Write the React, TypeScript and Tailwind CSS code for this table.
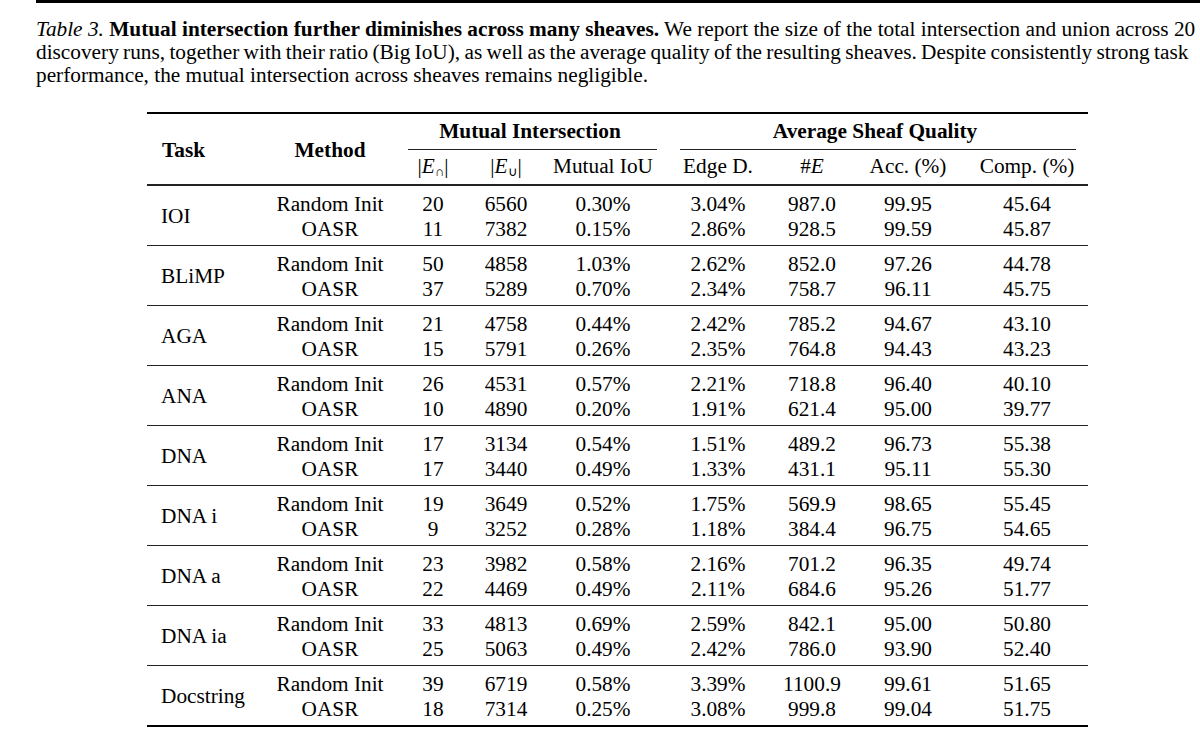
const cols = "grid grid-cols-[115px_136px_70px_76px_118px_112px_76px_116px_122px]";

type Row = string[];
type Group = { task: string; rows: Row[] };

const groups: Group[] = [
  {
    task: "IOI",
    rows: [
      ["Random Init", "20", "6560", "0.30%", "3.04%", "987.0", "99.95", "45.64"],
      ["OASR", "11", "7382", "0.15%", "2.86%", "928.5", "99.59", "45.87"],
    ],
  },
  {
    task: "BLiMP",
    rows: [
      ["Random Init", "50", "4858", "1.03%", "2.62%", "852.0", "97.26", "44.78"],
      ["OASR", "37", "5289", "0.70%", "2.34%", "758.7", "96.11", "45.75"],
    ],
  },
  {
    task: "AGA",
    rows: [
      ["Random Init", "21", "4758", "0.44%", "2.42%", "785.2", "94.67", "43.10"],
      ["OASR", "15", "5791", "0.26%", "2.35%", "764.8", "94.43", "43.23"],
    ],
  },
  {
    task: "ANA",
    rows: [
      ["Random Init", "26", "4531", "0.57%", "2.21%", "718.8", "96.40", "40.10"],
      ["OASR", "10", "4890", "0.20%", "1.91%", "621.4", "95.00", "39.77"],
    ],
  },
  {
    task: "DNA",
    rows: [
      ["Random Init", "17", "3134", "0.54%", "1.51%", "489.2", "96.73", "55.38"],
      ["OASR", "17", "3440", "0.49%", "1.33%", "431.1", "95.11", "55.30"],
    ],
  },
  {
    task: "DNA i",
    rows: [
      ["Random Init", "19", "3649", "0.52%", "1.75%", "569.9", "98.65", "55.45"],
      ["OASR", "9", "3252", "0.28%", "1.18%", "384.4", "96.75", "54.65"],
    ],
  },
  {
    task: "DNA a",
    rows: [
      ["Random Init", "23", "3982", "0.58%", "2.16%", "701.2", "96.35", "49.74"],
      ["OASR", "22", "4469", "0.49%", "2.11%", "684.6", "95.26", "51.77"],
    ],
  },
  {
    task: "DNA ia",
    rows: [
      ["Random Init", "33", "4813", "0.69%", "2.59%", "842.1", "95.00", "50.80"],
      ["OASR", "25", "5063", "0.49%", "2.42%", "786.0", "93.90", "52.40"],
    ],
  },
  {
    task: "Docstring",
    rows: [
      ["Random Init", "39", "6719", "0.58%", "3.39%", "1100.9", "99.61", "51.65"],
      ["OASR", "18", "7314", "0.25%", "3.08%", "999.8", "99.04", "51.75"],
    ],
  },
];

const GroupRows = ({ group }: { group: Group }) => {
  return (
    <div className={`${cols} grid-rows-[25px_25px] pt-[6px] pb-[3px]`}>
      <div className="row-span-2 flex items-center pl-[14px]">{group.task}</div>
      {group.rows.map((row, i) =>
        row.map((cell, j) => (
          <div
            key={`${i}-${j}`}
            className="text-center whitespace-nowrap"
            style={{ gridRow: i + 1, gridColumn: j + 2 }}
          >
            {cell}
          </div>
        ))
      )}
    </div>
  );
};

const Header = () => {
  return (
    <div className={`${cols} grid-rows-[35px_1px_34px]`}>
      <div className="row-span-3 flex items-center pl-[15px] pt-[3px] font-bold">Task</div>
      <div className="row-span-3 flex items-center justify-center pt-[3px] font-bold">Method</div>
      <div className="col-span-3 text-center font-bold pt-[5px]">Mutual Intersection</div>
      <div className="col-span-4 text-center font-bold pt-[5px]">Average Sheaf Quality</div>
      <div className="col-span-3 ml-[10px] mr-[5px] bg-[#222]" />
      <div className="col-span-4 ml-[18px] mr-[12px] bg-[#222]" />
      <div className="text-center pt-[4px] whitespace-nowrap">
        |<i>E</i>
        <sub className="text-[13px]">∩</sub>|
      </div>
      <div className="text-center pt-[4px] whitespace-nowrap">
        |<i>E</i>
        <sub className="text-[13px]">∪</sub>|
      </div>
      <div className="text-center pt-[4px] whitespace-nowrap">Mutual IoU</div>
      <div className="text-center pt-[4px] whitespace-nowrap">Edge D.</div>
      <div className="text-center pt-[4px] whitespace-nowrap">
        #<i>E</i>
      </div>
      <div className="text-center pt-[4px] whitespace-nowrap">Acc. (%)</div>
      <div className="text-center pt-[4px] whitespace-nowrap">Comp. (%)</div>
    </div>
  );
};

export default function App() {
  return (
    <div className="w-[1200px] h-[741px] overflow-hidden bg-white text-black font-['Liberation_Serif',serif] text-[21.3px] leading-[25px]">
      <div className="ml-[36px] h-[3px] bg-black" />
      <div className="ml-[36px] mt-[15px] leading-[23px] whitespace-nowrap">
        <div>
          <i>Table 3.</i> <b>Mutual intersection further diminishes across many sheaves.</b> We report the size of
          the total intersection and union across 20
        </div>
        <div className="[word-spacing:-1px]">
          discovery runs, together with their ratio (Big IoU), as well as the average quality of the resulting
          sheaves. Despite consistently strong task
        </div>
        <div>performance, the mutual intersection across sheaves remains negligible.</div>
      </div>
      <div className="ml-[147px] mt-[25px] w-[941px]">
        <div className="h-[2px] bg-black" />
        <Header />
        <div className="h-[1.5px] bg-[#222]" />
        {groups.map((g, i) => (
          <div key={g.task}>
            {i > 0 && <div className="h-px bg-[#222]" />}
            <GroupRows group={g} />
          </div>
        ))}
        <div className="h-[2px] bg-black" />
      </div>
    </div>
  );
}
